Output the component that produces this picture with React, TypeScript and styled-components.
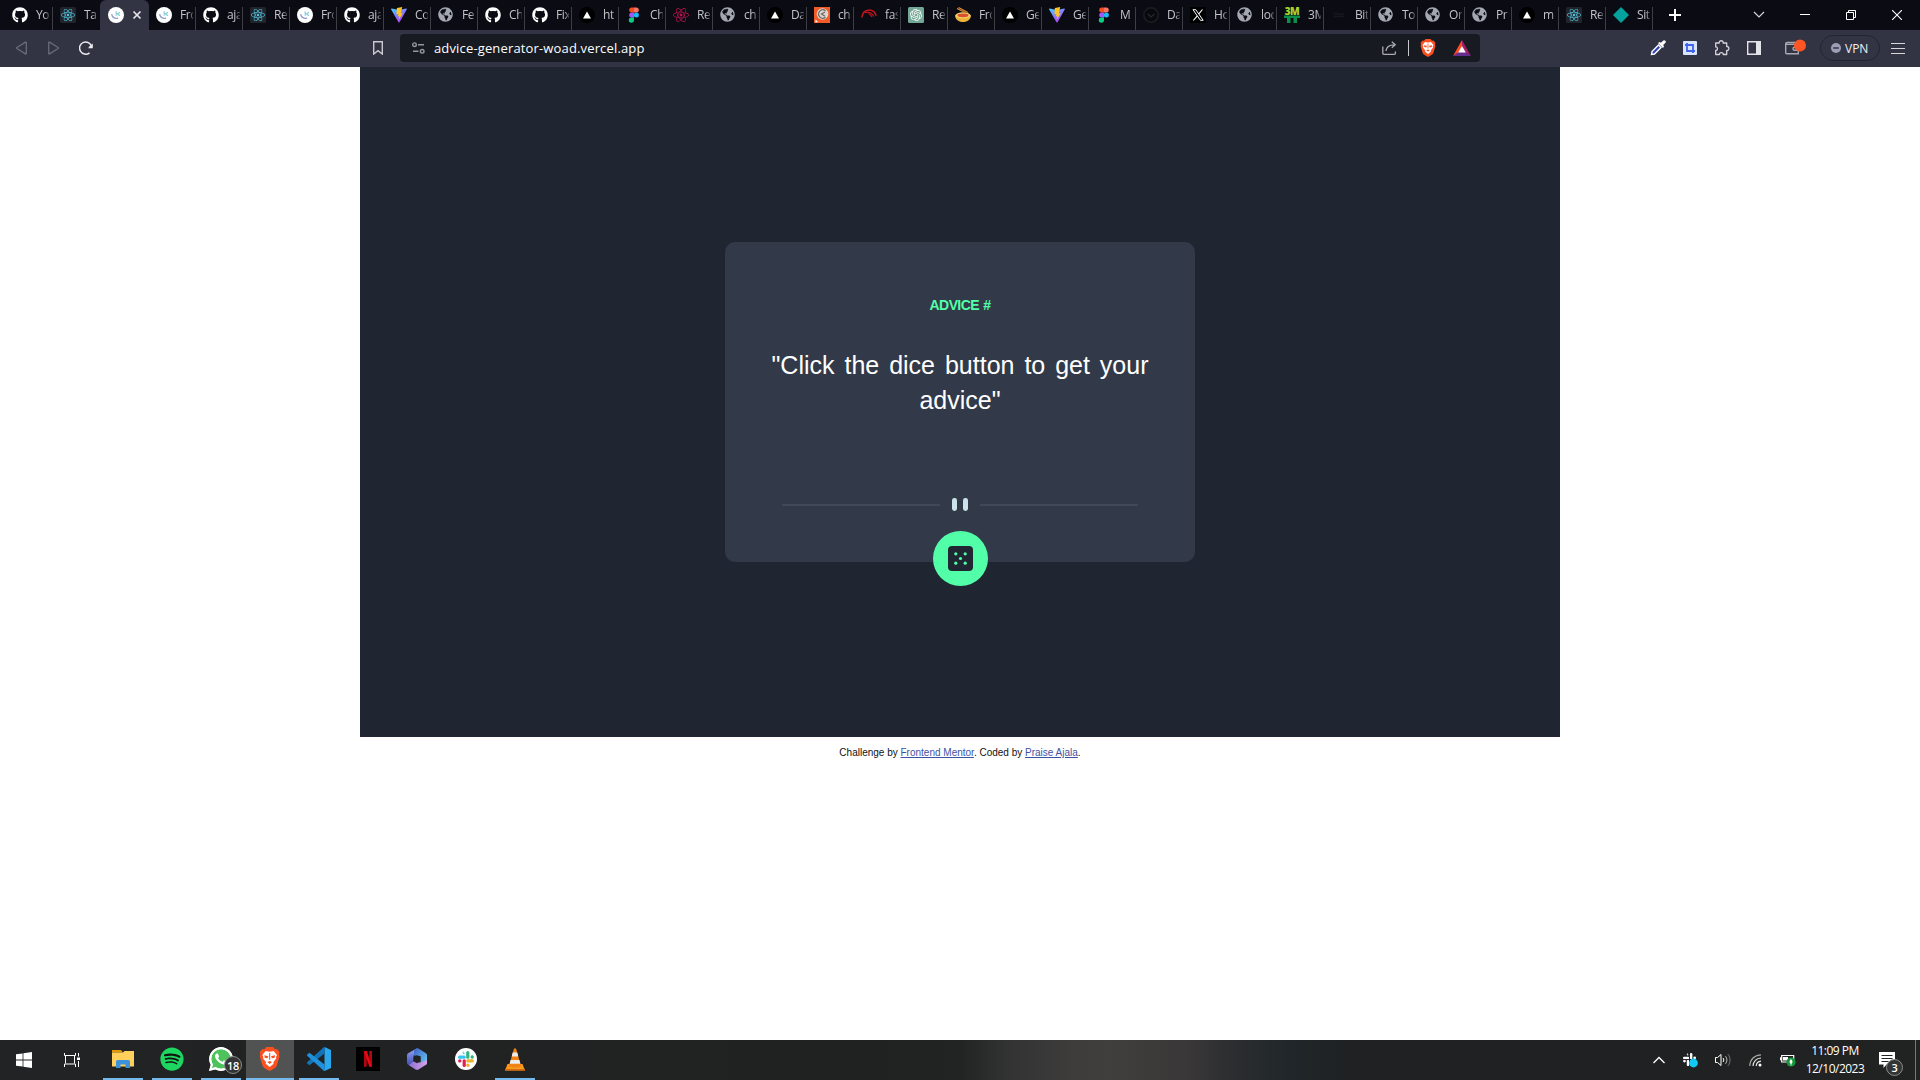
import React from "react";
import styled, { createGlobalStyle } from "styled-components";
import { FaGithub, FaReact, FaGlobeAmericas, FaSpotify, FaWhatsapp } from "react-icons/fa";
import { SiOpenai } from "react-icons/si";

const ui = `"Open Sans", "Noto Sans", sans-serif`;
const arial = `"Liberation Sans", Arial, sans-serif`;

const GlobalStyle = createGlobalStyle`
  * { box-sizing: border-box; }
  body { margin: 0; background: #fff; }
  svg { display: block; }
`;

const Screen = styled.div`
  width: 1920px;
  height: 1080px;
  display: flex;
  flex-direction: column;
  overflow: hidden;
`;

/* ---------- tab strip ---------- */

const TabStrip = styled.header`
  height: 30px;
  flex: none;
  display: flex;
  padding-left: 5px;
  background: #0b0b14;
  font-family: ${ui};
`;

const Tab = styled.div<{ $width: number; $active?: boolean }>`
  width: ${(p) => p.$width}px;
  flex: none;
  display: flex;
  align-items: center;
  padding-left: ${(p) => (p.$active ? 8 : 7)}px;
  background: ${(p) => (p.$active ? "#323443" : "transparent")};
  border-radius: ${(p) => (p.$active ? "6px 6px 0 0" : "0")};
`;

const Favicon = styled.span`
  width: 16px;
  height: 16px;
  flex: none;
  margin-right: 8px;
`;

const TabLabel = styled.span`
  width: 13px;
  flex: none;
  overflow: hidden;
  white-space: nowrap;
  font-size: 12px;
  letter-spacing: -0.4px;
  line-height: 16px;
  color: #c3c4ca;
  mask-image: linear-gradient(90deg, #000 65%, transparent 115%);
`;

const TabDivider = styled.span`
  width: 1px;
  height: 23px;
  flex: none;
  align-self: flex-end;
  margin-left: auto;
  background: #3e3e44;
`;

const WindowControls = styled.div`
  margin-left: auto;
  display: flex;
  align-items: center;
  gap: 22px;
  padding-right: 11px;
`;

const ControlIcon = styled.span`
  width: 24px;
  height: 24px;
  display: grid;
  place-items: center;
`;

const NewTab = styled.span`
  margin-left: 15px;
  align-self: center;
`;

/* ---------- toolbar ---------- */

const Toolbar = styled.div`
  height: 37px;
  flex: none;
  display: flex;
  align-items: center;
  padding-bottom: 1px;
  background: #323443;
  font-family: ${ui};
`;

const ToolIcon = styled.span<{ $before: number }>`
  flex: none;
  margin-left: ${(p) => p.$before}px;
`;

const AddressBar = styled.div`
  width: 1080px;
  height: 28px;
  flex: none;
  margin-left: 16px;
  padding-right: 9px;
  display: flex;
  align-items: center;
  background: #171a21;
  border-radius: 4px;
`;

const Address = styled.span`
  flex: 1;
  padding-left: 9px;
  font-size: 13px;
  letter-spacing: 0.15px;
  line-height: 18px;
  color: #fff;
`;

const BarDivider = styled.span`
  width: 1px;
  height: 16px;
  margin-left: 11px;
  background: #c7c8cc;
`;

const VpnPill = styled.span`
  width: 60px;
  height: 26px;
  margin-left: 14px;
  display: flex;
  align-items: center;
  gap: 4px;
  padding-left: 10px;
  border: 1px solid #22242f;
  border-radius: 13px;
  font-size: 12px;
  color: #eeeff2;
`;

/* ---------- page ---------- */

const Page = styled.main`
  flex: 1;
  display: flex;
  flex-direction: column;
  align-items: center;
  background: #fff;
  font-family: ${arial};
`;

const Stage = styled.section`
  width: 1200px;
  height: 670px;
  display: flex;
  justify-content: center;
  padding-top: 175px;
  background: #1f2632;
`;

const Card = styled.article`
  width: 470px;
  height: 320px;
  display: flex;
  flex-direction: column;
  align-items: center;
  padding-top: 55px;
  background: #323a49;
  border-radius: 10px;
`;

const AdviceId = styled.h1`
  flex: none;
  margin: 0;
  font-size: 14px;
  letter-spacing: -0.6px;
  word-spacing: 1px;
  line-height: 16px;
  font-weight: 700;
  color: #52ffa8;
`;

const Quote = styled.p`
  flex: none;
  width: 377px;
  height: 130px;
  margin: 35px 0 0;
  font-size: 25px;
  line-height: 35px;
  text-align: justify;
  text-align-last: center;
  color: #fff;
`;

const QuoteFirstLine = styled.span`
  display: block;
  text-align-last: justify;
`;

const DiceButton = styled.button`
  width: 55px;
  height: 55px;
  flex: none;
  margin: 20px 0 0 1px;
  padding: 0;
  display: grid;
  place-items: center;
  border: 0;
  border-radius: 50%;
  background: #52ffa8;
`;

const Divider = styled.div`
  flex: none;
  height: 13px;
  margin-top: 20px;
`;

const Attribution = styled.footer`
  margin-top: 10px;
  font-size: 10px;
  line-height: 12px;
  color: #111;
`;

const AttributionLink = styled.a`
  color: #3e52a3;
  text-decoration: underline;
`;

/* ---------- taskbar ---------- */

const Taskbar = styled.footer`
  height: 40px;
  flex: none;
  display: flex;
  background: linear-gradient(
    90deg,
    #222324 0,
    #202121 860px,
    #212423 960px,
    #333334 1010px,
    #3d3c3b 1070px,
    #403f3c 1110px,
    #393738 1190px,
    #2c2e30 1230px,
    #20262a 1290px,
    #1f2122 1350px,
    #212222 1920px
  );
  font-family: ${ui};
`;

const SystemCell = styled.span`
  width: 48px;
  display: grid;
  place-items: center;
`;

const AppRow = styled.div`
  display: flex;
  gap: 1px;
  margin-left: 3px;
`;

const AppCell = styled.span<{ $active?: boolean; $line?: number }>`
  width: 48px;
  height: 40px;
  display: grid;
  grid-template-rows: 38px 2px;
  justify-items: center;
  align-items: center;
  background: ${(p) => (p.$active ? "#515252" : "transparent")};
  &::after {
    content: "";
    width: ${(p) => p.$line ?? 0}px;
    height: 2px;
    background: #76b9ed;
  }
`;

const WithBadge = styled.span`
  position: relative;
`;

const Badge = styled.span<{ $left: number; $top: number; $size: number }>`
  position: absolute;
  left: ${(p) => p.$left}px;
  top: ${(p) => p.$top}px;
  width: ${(p) => p.$size}px;
  height: ${(p) => p.$size}px;
  display: grid;
  place-items: center;
  border: 1px solid #8b8c8c;
  border-radius: 50%;
  background: #333435;
  color: #fff;
  font-size: 11px;
  line-height: 1;
  font-weight: 600;
  letter-spacing: -0.4px;
`;

const Tray = styled.div`
  margin-left: auto;
  display: flex;
  align-items: center;
`;

const Clock = styled.div`
  width: 64px;
  margin-left: 7px;
  font-size: 12px;
  line-height: 18px;
  text-align: center;
  white-space: nowrap;
  letter-spacing: -0.5px;
  color: #fff;
`;

const ShowDesktop = styled.span`
  width: 5px;
  height: 40px;
  margin-left: 19px;
  border-left: 1px solid #777879;
`;

/* ---------- drawings ---------- */

type IconProps = { size?: number };

const ReactMark = ({ color = "#53c1de", box = true }: { color?: string; box?: boolean }) => (
  <svg width="16" height="16" viewBox="0 0 16 16">
    {box && <rect width="16" height="16" rx="1.5" fill="#20252b" />}
    <FaReact x={box ? 1 : 0} y={box ? 1 : 0} size={box ? 14 : 16} color={color} />
  </svg>
);

const MentorMark = () => (
  <svg width="16" height="16" viewBox="0 0 16 16">
    <circle cx="8" cy="8" r="8" fill="#fff" />
    <path d="M3.600 7.200c.6 3.200 3 4.700 6.500 4" fill="none" stroke="#8d9ccb" strokeWidth="1.300" />
    <path d="M8.200 4.200v4.600M12 5.200 9.500 6.800 12 8.800" fill="none" stroke="#7fc9d9" strokeWidth="1.100" />
  </svg>
);

const ViteMark = () => (
  <svg width="16" height="16" viewBox="0 0 32 32">
    <defs>
      <linearGradient id="vite" x1="0" y1="0" x2=".7" y2="1">
        <stop stopColor="#41d1ff" />
        <stop offset="1" stopColor="#bd34fe" />
      </linearGradient>
    </defs>
    <path d="M31.500 4.800 17 30.600a1.100 1.100 0 0 1-2 0L.3 4.800A1.100 1.100 0 0 1 1.500 3.200L16 5.800l14.300-2.600a1.100 1.100 0 0 1 1.200 1.600Z" fill="url(#vite)" />
    <path d="m22.500 0-10.700 2.100-.9 12.300 4-1-1.200 5.500 3-.9-1.500 7.800 8.200-13.500-4 .8Z" fill="#ffc51c" />
  </svg>
);

const VercelMark = () => (
  <svg width="16" height="16" viewBox="0 0 16 16">
    <circle cx="8" cy="8" r="8" fill="#000" />
    <path d="m8 4.500 4 7H4Z" fill="#fff" />
  </svg>
);

const FigmaMark = () => (
  <svg width="16" height="16" viewBox="0 0 16 16">
    <path d="M8 .5H5.700a2.500 2.500 0 0 0 0 5H8Z" fill="#f24e1e" />
    <path d="M8 .5h2.300a2.500 2.500 0 0 1 0 5H8Z" fill="#ff7262" />
    <path d="M8 5.500H5.700a2.500 2.500 0 0 0 0 5H8Z" fill="#a259ff" />
    <circle cx="10.400" cy="8" r="2.500" fill="#1abcfe" />
    <path d="M8 10.500H5.700a2.600 2.600 0 1 0 2.300 2.600Z" fill="#0acf83" />
  </svg>
);

const ChessMark = () => (
  <svg width="16" height="16" viewBox="0 0 16 16">
    <rect width="16" height="16" fill="#f25b28" />
    <circle cx="8.500" cy="7" r="5.800" fill="#ddd6d0" />
    <path d="M11.500 3.800a4.200 4.200 0 1 0 0 6.500" fill="none" stroke="#6b6561" strokeWidth="1.200" />
    <path d="m11 5-3.500 2L11 9.200" fill="none" stroke="#6b6561" strokeWidth="1.200" />
    <path d="M1.500 15.500v-3l2.500 2.500Z" fill="#fff" />
  </svg>
);

const FastMark = () => (
  <svg width="16" height="16" viewBox="0 0 16 16" fill="none" stroke="#c8141c">
    <path d="M.8 10.500C1.800 1.500 12.500.5 15.200 8.800" strokeWidth="1.500" />
    <path d="M4 5.800c4.500-1.500 7.500.8 8.800 3.800M7.500 6.500c2 .5 2.800 2 3.300 3.500" strokeWidth="1.200" />
  </svg>
);

const GptMark = () => (
  <svg width="16" height="16" viewBox="0 0 16 16">
    <rect width="16" height="16" rx="1.500" fill="#74a896" />
    <SiOpenai x={2} y={2} size={12} color="#fff" />
  </svg>
);

const BowlMark = () => (
  <svg width="16" height="16" viewBox="0 0 16 16">
    <path d="M0 8.500h16c-.3 4-3.500 6.500-8 6.500S.3 12.500 0 8.500Z" fill="#eeb13a" />
    <ellipse cx="8" cy="8.300" rx="7.500" ry="3" fill="#f3cf69" />
    <ellipse cx="8" cy="8.300" rx="5.500" ry="1.900" fill="#d9502c" />
    <path d="m2 1.500 9 4.500M3.500.5 13 5.500" stroke="#d98a35" strokeWidth="1.200" />
  </svg>
);

const DarkRing = () => (
  <svg width="16" height="16" viewBox="0 0 16 16" fill="none">
    <circle cx="8" cy="8" r="7.200" stroke="#1d1e22" strokeWidth="1.500" fill="#08090f" />
    <path d="m5 7 3 3 3.500-3" stroke="#292a2e" strokeWidth="1.200" />
  </svg>
);

const XMark = () => (
  <svg width="16" height="16" viewBox="0 0 16 16">
    <rect width="16" height="16" fill="#000" />
    <path d="M3 2.700h2.800l7.400 10.600h-2.800Z" fill="none" stroke="#fff" />
    <path d="M12.500 2.500 8.800 6.900M7.300 8.900l-4 4.600" stroke="#fff" strokeWidth="1.100" />
  </svg>
);

const MmmWord = styled.span`
  width: 16px;
  height: 16px;
  display: grid;
  grid-template-rows: 8px 8px;
  justify-items: center;
  font: 800 10px/8px ${ui};
  letter-spacing: -0.6px;
  color: #a5d62b;
`;

const MmmMark = () => (
  <MmmWord>
    <span>3M</span>
    <svg width="16" height="8" viewBox="0 0 16 8">
      <path d="M0 .5h16V3h-3v5h-3.500V3h-3v5H3V3H0Z" fill="#0c8f4b" />
    </svg>
  </MmmWord>
);

const FaintMark = () => (
  <svg width="16" height="16" viewBox="0 0 16 16">
    <path d="M2.500 6.500h4l1.500.8h5M2.500 9.500h11" stroke="#17181f" strokeWidth="1.500" fill="none" />
  </svg>
);

const DiamondMark = () => (
  <svg width="16" height="16" viewBox="0 0 16 16">
    <path d="m8 0 8 8-8 8-8-8Z" fill="#05a19c" />
  </svg>
);

const BraveShield = ({ size = 18 }: IconProps) => (
  <svg width={(size * 16) / 18} height={size} viewBox="0 0 32 36">
    <path d="M8 3.500 11 0h10l3 3.500 3-.5 4 5-1 3 1 3-4.500 14.500c-.7 2-4 4-10.500 7.500C9.500 32.500 6.200 30.500 5.500 28.500L1 14l1-3-1-3 4-5Z" fill="#fb5020" />
    <path d="m10 6 6 1 6-1 5 6-1.500 3 .5 2-4.500 6 .5 2-6 5-6-5 .5-2L6 17l.5-2L5 12Z" fill="#fff" />
    <path d="m8 12.500 6 1.200-1.500 3.300-4-1ZM24 12.500l-6 1.200 1.500 3.300 4-1ZM12.500 22.500 16 21l3.500 1.500L16 25.500ZM15.200 9h1.600v10h-1.600Z" fill="#fb5020" />
  </svg>
);

const BatMark = () => (
  <svg width="18" height="16" viewBox="0 0 18 16">
    <path d="M9 0 0 16l9-5.500Z" fill="#ff4b20" />
    <path d="m9 0 9 16-9-5.500Z" fill="#9e1f63" />
    <path d="M0 16h18l-9-6Z" fill="#662d91" />
    <path d="m9 6 3.800 6.500H5.200Z" fill="#fff" />
  </svg>
);

const Slack = ({ size = 16, mono }: { size?: number; mono?: boolean }) => {
  const [b, g, y, r] = mono ? ["#fff", "#fff", "#fff", "#fff"] : ["#36c5f0", "#2eb67d", "#ecb22e", "#e01e5a"];
  return (
    <svg width={size} height={size} viewBox="0 0 16 16">
      <path d="M1.600 6.200h4.600" stroke={b} strokeWidth="3.200" strokeLinecap="round" />
      <path d="M4.800 1.600h1.600v1.600H6.200A1.600 1.600 0 1 1 6.200 0" fill={b} />
      <path d="M9.800 1.600v4.600" stroke={g} strokeWidth="3.200" strokeLinecap="round" />
      <circle cx="14.200" cy="6" r="1.700" fill={g} />
      <path d="M9.800 9.800h4.600" stroke={y} strokeWidth="3.200" strokeLinecap="round" />
      <circle cx="9.900" cy="14.200" r="1.700" fill={y} />
      <path d="M6.200 9.800v4.600" stroke={r} strokeWidth="3.200" strokeLinecap="round" />
      <circle cx="1.800" cy="9.900" r="1.700" fill={r} />
      {mono && <path d="M8 0v16M0 8h16" stroke="#222324" strokeWidth="1.200" />}
    </svg>
  );
};

const FolderIcon = () => (
  <svg width="22" height="18" viewBox="0 0 22 18">
    <path d="M0 0h9l2 2.500H0Z" fill="#e09a07" />
    <path d="M0 2.500h11L12.500 1H22v15.500H0Z" fill="#ffd15c" />
    <path d="M4 18v-6.500a1.500 1.500 0 0 1 1.500-1.500h11a1.500 1.500 0 0 1 1.500 1.500V18h-4.500v-3.500h-5V18Z" fill="#3b91da" />
  </svg>
);

const SpotifyIcon = () => (
  <svg width="24" height="24" viewBox="0 0 24 24">
    <circle cx="12" cy="12" r="11" fill="#10140f" />
    <FaSpotify size={24} color="#1ed760" />
  </svg>
);

const WhatsappIcon = () => (
  <svg width="24" height="24" viewBox="0 0 24 24">
    <path d="M0 24 1.700 17.800A11.900 11.900 0 1 1 6.300 22.400Z" fill="#fff" />
    <circle cx="12.100" cy="11.900" r="9.900" fill="#4fc35b" />
    <path d="m2.600 21.400 1.300-4.900 3.600 3.700Z" fill="#4fc35b" />
    <FaWhatsapp x={-1.5} y={-1.5} size={27} color="#fff" />
  </svg>
);

const VsCodeIcon = () => (
  <svg width="24" height="24" viewBox="0 0 24 24">
    <path d="M17.500 0 24 3v18l-6.500 3Z" fill="#2ba7ee" />
    <path d="M17.500 6.500 2.500 18.300.4 16.700c-.5-.5-.5-1.200 0-1.700L17 0l1 .3Z" fill="#1273b8" />
    <path d="M17.500 17.500 2.500 5.700.4 7.300c-.5.500-.5 1.200 0 1.700L17 24l1-.3Z" fill="#1e90dc" />
  </svg>
);

const NetflixIcon = () => (
  <svg width="24" height="24" viewBox="0 0 24 24">
    <path d="M0 0h24v24H0Z" fill="#000" />
    <path d="M8 4v16l2.800-.4V4ZM13.200 4v15.600L16 20V4Z" fill="#b1060f" />
    <path d="M8 4h2.800L16 20l-2.800-.4Z" fill="#e50914" />
  </svg>
);

const OfficeIcon = () => (
  <svg width="20" height="22" viewBox="0 0 20 22">
    <defs>
      <linearGradient id="of1" x1="0" y1="0" x2="0" y2="1">
        <stop stopColor="#9aa5f5" />
        <stop offset="1" stopColor="#4050b8" />
      </linearGradient>
      <linearGradient id="of2" x1="0" y1="0" x2="1" y2="1">
        <stop stopColor="#3f62c8" />
        <stop offset="1" stopColor="#67cdf6" />
      </linearGradient>
      <linearGradient id="of3" x1="0" y1="0" x2="1" y2="0">
        <stop stopColor="#8b6fd0" />
        <stop offset="1" stopColor="#d9a4ea" />
      </linearGradient>
    </defs>
    <path d="M10 .2 1.500 5C.5 5.600 0 6.400 0 7.500v7c0 1 .5 2 1.500 2.500L6.500 14V8Z" fill="url(#of1)" />
    <path d="M10 .2 7 2v5.500L13.500 8v6.500L18.500 17c1-.6 1.500-1.500 1.500-2.500v-7c0-1-.5-2-1.500-2.500L11.500.5Z" fill="url(#of2)" />
    <path d="m1.500 17 5-3.500 7 1L20 12v2.500c0 1-.5 2-1.500 2.500l-7 4.500c-1 .6-2 .6-3 0Z" fill="url(#of3)" />
    <path d="m10 7.200 3.500 2v4L10 15.200l-3.500-2v-4Z" fill="#222324" />
  </svg>
);

const SlackApp = () => (
  <svg width="22" height="22" viewBox="0 0 22 22">
    <circle cx="11" cy="11" r="11" fill="#fff" />
    <g transform="translate(3 3)">
      <Slack />
    </g>
  </svg>
);

const VlcIcon = () => (
  <svg width="20" height="23" viewBox="0 0 20 23">
    <path d="M2.500 16h15l2.500 6.500H0Z" fill="#f79a1e" />
    <path d="M9 .5h2L16 18c-2 2-10 2-12 0Z" fill="#f08313" />
    <path d="m7.700 4.500-1 4h6.600l-1-4ZM5.600 12l-1 3.700h10.800l-1-3.700Z" fill="#ececec" />
    <path d="M0 21h20v1.500H0Z" fill="#d76d0a" />
  </svg>
);

/* ---------- data ---------- */

const github = <FaGithub size={16} color="#fff" />;
const globe = <FaGlobeAmericas size={15} color="#a3a7b0" />;

const tabs: { icon: React.ReactNode; label: string; active?: boolean; width?: number }[] = [
  { icon: github, label: "Yo", width: 48 },
  { icon: <ReactMark />, label: "Tas" },
  { icon: <MentorMark />, label: "", active: true, width: 49 },
  { icon: <MentorMark />, label: "Fro" },
  { icon: github, label: "aja" },
  { icon: <ReactMark />, label: "Re" },
  { icon: <MentorMark />, label: "Fro" },
  { icon: github, label: "aja" },
  { icon: <ViteMark />, label: "Co" },
  { icon: globe, label: "Fe" },
  { icon: github, label: "Ch" },
  { icon: github, label: "Fix" },
  { icon: <VercelMark />, label: "ht" },
  { icon: <FigmaMark />, label: "Ch" },
  { icon: <ReactMark color="#b3144c" box={false} />, label: "Re" },
  { icon: globe, label: "ch" },
  { icon: <VercelMark />, label: "Da" },
  { icon: <ChessMark />, label: "ch" },
  { icon: <FastMark />, label: "fas" },
  { icon: <GptMark />, label: "Re" },
  { icon: <BowlMark />, label: "Fro" },
  { icon: <VercelMark />, label: "Ge" },
  { icon: <ViteMark />, label: "Ge" },
  { icon: <FigmaMark />, label: "M" },
  { icon: <DarkRing />, label: "Da" },
  { icon: <XMark />, label: "Ho" },
  { icon: globe, label: "loc" },
  { icon: <MmmMark />, label: "3M" },
  { icon: <FaintMark />, label: "Bit" },
  { icon: globe, label: "To" },
  { icon: globe, label: "Or" },
  { icon: globe, label: "Pr" },
  { icon: <VercelMark />, label: "m" },
  { icon: <ReactMark />, label: "Re" },
  { icon: <DiamondMark />, label: "Sit" },
];

const App = () => (
  <Screen>
    <GlobalStyle />
    <TabStrip>
      {tabs.map((tab, i) => (
        <Tab key={i} $width={tab.width ?? 47} $active={tab.active}>
          <Favicon>{tab.icon}</Favicon>
          {tab.active ? (
            <svg width="10" height="10" viewBox="0 0 10 10">
              <path d="m1.500 1.500 7 7m0-7-7 7" stroke="#e4e5e9" strokeWidth="1.700" />
            </svg>
          ) : (
            <TabLabel>{tab.label}</TabLabel>
          )}
          {i !== 1 && !tab.active && <TabDivider />}
        </Tab>
      ))}
      <NewTab>
        <svg width="14" height="14" viewBox="0 0 14 14">
          <path d="M7 1v12M1 7h12" stroke="#fff" strokeWidth="2" />
        </svg>
      </NewTab>
      <WindowControls>
        <ControlIcon>
          <svg width="12" height="8" viewBox="0 0 12 8">
            <path d="m1 1 5 5 5-5" fill="none" stroke="#d5d6da" strokeWidth="1.200" />
          </svg>
        </ControlIcon>
        <ControlIcon>
          <svg width="10" height="2" viewBox="0 0 10 2">
            <path d="M0 .5h10" stroke="#fff" />
          </svg>
        </ControlIcon>
        <ControlIcon>
          <svg width="10" height="10" viewBox="0 0 10 10">
            <path d="M2.500 2.500v-2h7v7h-2M.5 2.500h7v7h-7Z" fill="none" stroke="#fff" />
          </svg>
        </ControlIcon>
        <ControlIcon>
          <svg width="10" height="10" viewBox="0 0 10 10">
            <path d="m0 0 10 10M10 0 0 10" stroke="#fff" strokeWidth="1.100" />
          </svg>
        </ControlIcon>
      </WindowControls>
    </TabStrip>

    <Toolbar>
      <ToolIcon $before={16}>
        <svg width="11" height="14" viewBox="0 0 11 14">
          <path d="M10.300 1.500v11a.5.5 0 0 1-.8.400L.9 7.500a.6.6 0 0 1 0-1l8.600-5.400a.5.5 0 0 1 .8.400Z" fill="none" stroke="#696b78" strokeWidth="1.300" />
        </svg>
      </ToolIcon>
      <ToolIcon $before={21}>
        <svg width="11" height="14" viewBox="0 0 11 14">
          <path d="M.7 1.500v11a.5.5 0 0 0 .8.400l8.600-5.400a.6.6 0 0 0 0-1L1.500 1.100a.5.5 0 0 0-.8.400Z" fill="none" stroke="#696b78" strokeWidth="1.300" />
        </svg>
      </ToolIcon>
      <ToolIcon $before={20}>
        <svg width="14" height="14" viewBox="0 0 14 14">
          <path d="M10.500 11.800A6.100 6.100 0 1 1 12.600 5.500" fill="none" stroke="#e9eaee" strokeWidth="1.500" />
          <path d="M13.800 2.500v4.700H9.200l1.300-2Z" fill="#e9eaee" />
        </svg>
      </ToolIcon>
      <ToolIcon $before={279}>
        <svg width="12" height="14" viewBox="0 0 12 14">
          <path d="M1.700.7h8.600v12.300L6 9.700 1.700 13Z" fill="none" stroke="#c9cad0" strokeWidth="1.400" />
        </svg>
      </ToolIcon>
      <AddressBar>
        <ToolIcon $before={12}>
          <svg width="13" height="12" viewBox="0 0 13 12" fill="none" stroke="#94969d" strokeWidth="1.400">
            <circle cx="2.500" cy="2.700" r="1.800" />
            <path d="M6 2.700h6M1 9.300h5.500" />
            <circle cx="10.200" cy="9.300" r="1.800" />
          </svg>
        </ToolIcon>
        <Address>advice-generator-woad.vercel.app</Address>
        <svg width="15" height="14" viewBox="0 0 15 14" fill="none" stroke="#a9abb0" strokeWidth="1.300">
          <path d="M.8 5.500v6.800a1 1 0 0 0 1 1h10.600a1 1 0 0 0 1-1V10.500" />
          <path d="M4 10c.2-3.800 2.500-6.200 8.500-6.200M9.800.8l3.400 3-3.400 3" />
        </svg>
        <BarDivider />
        <ToolIcon $before={11}>
          <BraveShield />
        </ToolIcon>
        <ToolIcon $before={17}>
          <BatMark />
        </ToolIcon>
      </AddressBar>
      <ToolIcon $before={170}>
        <svg width="16" height="16" viewBox="0 0 16 16">
          <path d="m1.500 14.500.5-3 6.500-6.500L11 7.500 4.500 14Z" fill="#3046b4" stroke="#fff" strokeWidth="1.400" />
          <path d="m8 3 1.500-1 1.500.8L13 .7a1.600 1.600 0 0 1 2.300 2.300l-2.100 2 .8 1.500-1 1.500Z" fill="#fff" />
        </svg>
      </ToolIcon>
      <ToolIcon $before={17}>
        <svg width="14" height="14" viewBox="0 0 14 14">
          <rect width="14" height="14" rx="1" fill="#d9e4ff" />
          <path d="M4 2v8h8M2 4h8v8" fill="none" stroke="#3f63ec" strokeWidth="1.800" />
        </svg>
      </ToolIcon>
      <ToolIcon $before={17}>
        <svg width="16" height="16" viewBox="0 0 16 16">
          <path d="M1.700 3h3.500c-.3-3 4.300-3 4 0h3.500v3.500c2.900-.2 2.900 4.200 0 4v4H9.300c0-2.600-3.900-2.600-3.900 0H1.700v-4c2.400 0 2.400-3.600 0-3.600Z" fill="none" stroke="#d3d4d9" strokeWidth="1.300" strokeLinejoin="round" />
        </svg>
      </ToolIcon>
      <ToolIcon $before={17}>
        <svg width="14" height="14" viewBox="0 0 14 14">
          <path d="M.7.700h12.600v12.600H.7Z" fill="none" stroke="#e3e4e8" strokeWidth="1.400" />
          <path d="M9 .5h4.500v13H9Z" fill="#e3e4e8" />
        </svg>
      </ToolIcon>
      <ToolIcon $before={24}>
        <svg width="21" height="18" viewBox="0 0 21 18">
          <path d="M.7 5.200v8.500a1 1 0 0 0 1 1h11.600V5.200ZM.7 5.200A1.600 1.600 0 0 1 2.300 3.400h8M9.500 8.200h4v3h-4a1.500 1.500 0 0 1 0-3Z" fill="none" stroke="#a8a9b2" strokeWidth="1.400" />
          <circle cx="15" cy="6.500" r="6" fill="#fd5523" />
        </svg>
      </ToolIcon>
      <VpnPill>
        <svg width="10" height="10" viewBox="0 0 10 10">
          <circle cx="5" cy="5" r="5" fill="#9b9eb4" />
          <path d="M2.200 5h5.600" stroke="#323443" strokeWidth="1.500" />
        </svg>
        VPN
      </VpnPill>
      <ToolIcon $before={11}>
        <svg width="14" height="12" viewBox="0 0 14 12">
          <path d="M0 1.500h14M0 6.500h14M0 11.500h14" stroke="#d6d7dc" />
        </svg>
      </ToolIcon>
    </Toolbar>

    <Page>
      <Stage>
        <Card>
          <AdviceId>ADVICE #</AdviceId>
          <Quote>
            <QuoteFirstLine>"Click the dice button to get your</QuoteFirstLine> advice"
          </Quote>
          <Divider>
            <svg width="356" height="13" viewBox="0 0 356 13">
              <path fill="#3f495a" d="M0 6h158v2H0ZM198 6h158v2H198Z" />
              <g fill="#cee3e9">
                <rect x="170" width="5" height="13" rx="2.400" />
                <rect x="181" width="5" height="13" rx="2.400" />
              </g>
            </svg>
          </Divider>
          <DiceButton aria-label="New advice">
            <svg width="25" height="25" viewBox="0 0 25 25">
              <rect width="25" height="25" rx="4" fill="#202733" />
              <g fill="#52ffa8">
                <circle cx="7.800" cy="7.800" r="1.600" />
                <circle cx="17.200" cy="7.800" r="1.600" />
                <circle cx="12.500" cy="12.500" r="1.600" />
                <circle cx="7.800" cy="17.200" r="1.600" />
                <circle cx="17.200" cy="17.200" r="1.600" />
              </g>
            </svg>
          </DiceButton>
        </Card>
      </Stage>
      <Attribution>
        Challenge by <AttributionLink>Frontend Mentor</AttributionLink>. Coded by{" "}
        <AttributionLink>Praise Ajala</AttributionLink>.
      </Attribution>
    </Page>

    <Taskbar>
      <SystemCell>
        <svg width="16" height="16" viewBox="0 0 16 16">
          <path d="M0 2.300 6.600 1.400v6.200H0ZM7.400 1.300 16 0v7.600H7.400ZM0 8.400h6.600v6.200L0 13.700ZM7.400 8.400H16V16l-8.600-1.300Z" fill="#fff" />
        </svg>
      </SystemCell>
      <SystemCell>
        <svg width="16" height="16" viewBox="0 0 16 16" fill="none" stroke="#fff">
          <path d="M.5 1v2.500h11V1M1.500 3.500v8M10.500 3.500v8M.5 15v-3h11v3M14.500 1v3.500M14.500 9v6" />
          <path d="M13 5.500h3v2.500h-3Z" fill="#fff" stroke="none" />
        </svg>
      </SystemCell>
      <AppRow>
        <AppCell $line={40}><FolderIcon /></AppCell>
        <AppCell $line={40}><SpotifyIcon /></AppCell>
        <AppCell $line={40}>
          <WithBadge>
            <WhatsappIcon />
            <Badge $left={15} $top={9} $size={18}>18</Badge>
          </WithBadge>
        </AppCell>
        <AppCell $line={48} $active><BraveShield size={24} /></AppCell>
        <AppCell $line={40}><VsCodeIcon /></AppCell>
        <AppCell><NetflixIcon /></AppCell>
        <AppCell><OfficeIcon /></AppCell>
        <AppCell><SlackApp /></AppCell>
        <AppCell $line={40}><VlcIcon /></AppCell>
      </AppRow>
      <Tray>
        <svg width="12" height="8" viewBox="0 0 12 8">
          <path d="m.5 7 5.500-5.500L11.500 7" fill="none" stroke="#fff" strokeWidth="1.300" />
        </svg>
        <ToolIcon $before={18}>
          <svg width="15" height="15" viewBox="0 0 15 15">
            <g transform="scale(.82)">
              <Slack mono />
            </g>
            <circle cx="10.500" cy="10" r="4.400" fill="#12c8f4" />
          </svg>
        </ToolIcon>
        <ToolIcon $before={17}>
          <svg width="16" height="14" viewBox="0 0 16 14" fill="none">
            <path d="M.5 4.500h2L6 1.500v11l-3.500-3h-2Z" stroke="#fff" />
            <path d="M8 5c1 1.200 1 2.800 0 4" stroke="#fff" />
            <path d="M10.500 3.200c1.900 2.300 1.900 5.300 0 7.600" stroke="#bbb" />
            <path d="M13 1.200c2.700 3.500 2.700 8.100 0 11.600" stroke="#777" />
          </svg>
        </ToolIcon>
        <ToolIcon $before={18}>
          <svg width="13" height="13" viewBox="0 0 13 13" fill="none" stroke="#e2e2e2" strokeWidth="1.200">
            <path d="M.7 12C1 5.500 5.500 1 12 .8" stroke="#a5a5a5" />
            <path d="M4 12c.2-4.500 3.500-7.800 8-8" />
            <path d="M7.200 12c.2-2.700 2.100-4.600 4.800-4.800" />
            <circle cx="11" cy="11" r="1.500" fill="#fff" stroke="none" />
          </svg>
        </ToolIcon>
        <ToolIcon $before={18}>
          <svg width="16" height="14" viewBox="0 0 16 14">
            <path d="M1.700 2.500h12v6.500h-12Z" fill="none" stroke="#fff" strokeWidth="1.200" />
            <path d="M0 4.300h1.300v3H0ZM3 4h5v3.500H3Z" fill="#fff" />
            <circle cx="11" cy="9" r="4.600" fill="#14983b" />
            <path d="M11 6c2 2 2 4 0 5-2-1-2-3 0-5Z" fill="#fff" />
            <path d="M11 8.500v4" stroke="#fff" strokeWidth=".8" />
          </svg>
        </ToolIcon>
        <Clock>
          11:09 PM
          <br />
          12/10/2023
        </Clock>
        <ToolIcon $before={12}>
          <WithBadge as="div">
            <svg width="17" height="17" viewBox="0 0 17 17">
              <path d="M0 0h16v12.500H7.500L4.500 16v-3.500H0Z" fill="#fff" />
              <path d="M2.500 3.500h11M2.500 6.500h11M2.500 9.500h7" stroke="#222324" />
            </svg>
            <Badge $left={7} $top={7} $size={17}>3</Badge>
          </WithBadge>
        </ToolIcon>
        <ShowDesktop />
      </Tray>
    </Taskbar>
  </Screen>
);

export default App;
